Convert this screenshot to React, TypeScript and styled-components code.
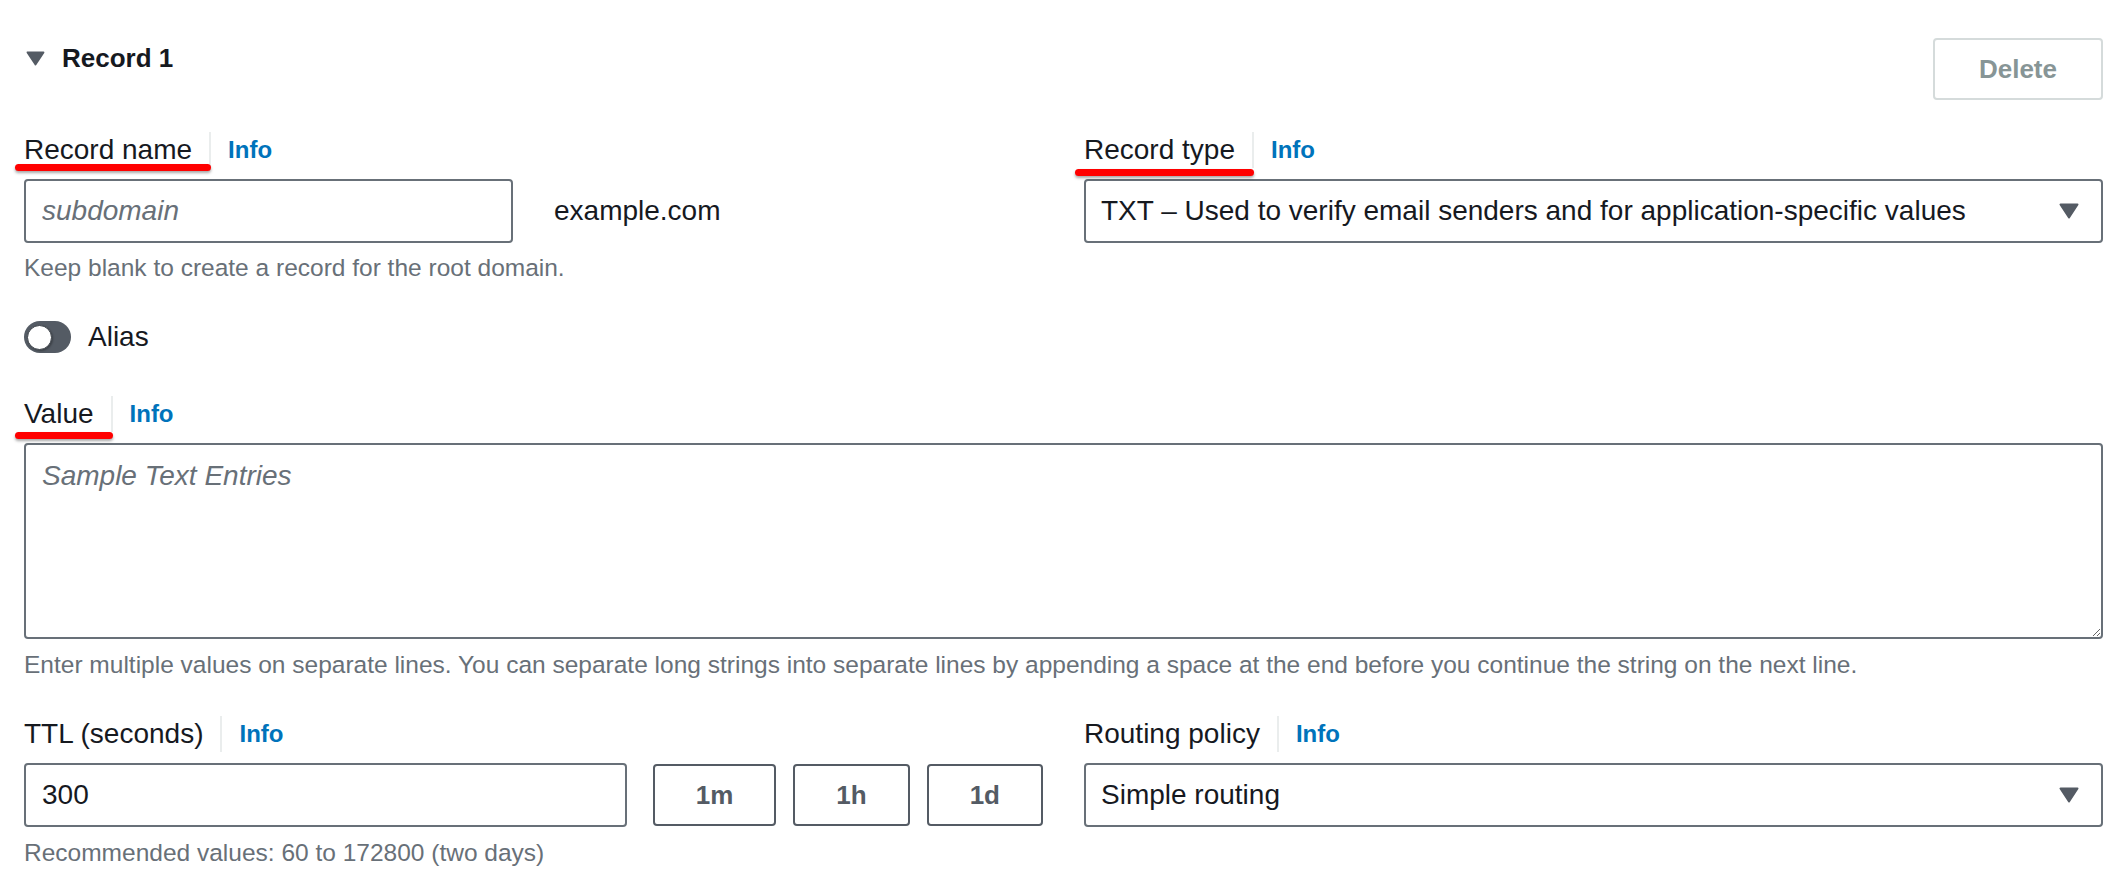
import React from "react";
import styled, { createGlobalStyle } from "styled-components";

const GlobalStyle = createGlobalStyle`
  html, body {
    margin: 0;
    padding: 0;
    background: #ffffff;
  }
  body {
    font-family: "Liberation Sans", Arial, sans-serif;
    color: #16191f;
  }
  * { box-sizing: border-box; }
`;

const Page = styled.div`
  width: 2118px;
  padding: 38px 15px 0 24px;
`;

const Header = styled.div`
  display: flex;
  justify-content: space-between;
  align-items: flex-start;
  margin-bottom: 28px;
`;

const SectionToggle = styled.div`
  display: flex;
  align-items: center;
  gap: 17px;
  height: 40px;
  padding-left: 2px;
  font-size: 26px;
  font-weight: 700;
  line-height: 40px;
  color: #16191f;
`;

const DeleteButton = styled.button`
  height: 62px;
  padding: 0 44px;
  border: 2px solid #d5dbdb;
  border-radius: 4px;
  background: #ffffff;
  color: #879596;
  font-family: inherit;
  font-size: 26px;
  font-weight: 700;
`;

const Grid = styled.div<{ $top?: number }>`
  display: grid;
  grid-template-columns: 1fr 1fr;
  column-gap: 41px;
  margin-top: ${(p) => p.$top ?? 0}px;
`;

const Field = styled.div<{ $top?: number }>`
  display: flex;
  flex-direction: column;
  margin-top: ${(p) => p.$top ?? 0}px;
`;

const LabelRow = styled.div`
  display: flex;
  align-items: center;
  height: 44px;
  margin-bottom: 7px;
`;

const LabelText = styled.span<{ $mark?: number }>`
  position: relative;
  font-size: 28px;
  line-height: 36px;
  padding-right: 17px;
  border-right: 2px solid #eaeded;
  color: #16191f;
  &::after {
    content: "";
    display: ${(p) => (p.$mark !== undefined ? "block" : "none")};
    position: absolute;
    left: -9px;
    right: -2px;
    top: ${(p) => p.$mark ?? 0}px;
    height: 7px;
    border-radius: 4px;
    background: #ff0000;
    box-shadow: 0 2px 3px rgba(0, 0, 0, 0.35);
  }
`;

const InfoLink = styled.a`
  padding-left: 17px;
  font-size: 24px;
  font-weight: 700;
  color: #0073bb;
  text-decoration: none;
`;

const InlineRow = styled.div`
  display: flex;
  align-items: center;
  gap: 41px;
`;

const TextInput = styled.input<{ $width?: number }>`
  height: 64px;
  width: ${(p) => (p.$width ? `${p.$width}px` : "auto")};
  flex: ${(p) => (p.$width ? "none" : "1")};
  min-width: 0;
  padding: 0 16px;
  border: 2px solid #687078;
  border-radius: 4px;
  background: #ffffff;
  font-family: inherit;
  font-size: 28px;
  color: #16191f;
  outline: none;
  &::placeholder {
    color: #687078;
    font-style: italic;
  }
`;

const Suffix = styled.span`
  font-size: 28px;
  color: #16191f;
`;

const Help = styled.div<{ $top?: number }>`
  margin-top: ${(p) => p.$top ?? 9}px;
  font-size: 24.5px;
  line-height: 32px;
  color: #687078;
`;

const Select = styled.div`
  display: flex;
  align-items: center;
  justify-content: space-between;
  height: 64px;
  padding: 0 22px 0 15px;
  border: 2px solid #687078;
  border-radius: 4px;
  background: #ffffff;
  font-size: 28px;
  color: #16191f;
`;

const ToggleRow = styled.div`
  display: flex;
  align-items: center;
  gap: 17px;
  height: 44px;
  margin-top: 31px;
  font-size: 28px;
`;

const Track = styled.span`
  display: flex;
  align-items: center;
  width: 47px;
  height: 32px;
  padding: 0 3px;
  border-radius: 16px;
  background: #545b64;
`;

const Knob = styled.span`
  width: 25px;
  height: 25px;
  border-radius: 50%;
  background: #ffffff;
  border: 1.5px solid #3d434a;
  box-shadow: 1px 1px 2px rgba(0, 0, 0, 0.3);
`;

const TextArea = styled.textarea`
  display: block;
  width: 100%;
  height: 196px;
  padding: 11px 16px;
  border: 2px solid #687078;
  border-radius: 4px;
  background: #ffffff;
  font-family: inherit;
  font-size: 28px;
  line-height: 40px;
  color: #16191f;
  resize: vertical;
  outline: none;
  &::placeholder {
    color: #687078;
    font-style: italic;
  }
`;

const TtlControls = styled.div`
  display: flex;
  align-items: center;
`;

const PresetGroup = styled.div`
  display: flex;
  gap: 17px;
  margin-left: 26px;
`;

const PresetButton = styled.button`
  height: 62px;
  padding: 0 41px;
  border: 2px solid #545b64;
  border-radius: 4px;
  background: #ffffff;
  color: #545b64;
  font-family: inherit;
  font-size: 26px;
  font-weight: 700;
`;

const Caret = ({ w, h }: { w: number; h: number }) => (
  <svg width={w} height={h} viewBox="0 0 20 16" aria-hidden="true">
    <path d="M1.5 1.5 H18.5 L10 14.5 Z" fill="#545b64" stroke="#545b64" strokeWidth="2" strokeLinejoin="round" />
  </svg>
);

const Label = ({ text, mark }: { text: string; mark?: number }) => (
  <LabelRow>
    <LabelText $mark={mark}>{text}</LabelText>
    <InfoLink href="#">Info</InfoLink>
  </LabelRow>
);

export default function App() {
  return (
    <>
      <GlobalStyle />
      <Page>
        <Header>
          <SectionToggle>
            <Caret w={19} h={15} />
            Record 1
          </SectionToggle>
          <DeleteButton disabled>Delete</DeleteButton>
        </Header>

        <Grid>
          <Field>
            <Label text="Record name" mark={32} />
            <InlineRow>
              <TextInput $width={489} placeholder="subdomain" />
              <Suffix>example.com</Suffix>
            </InlineRow>
            <Help>Keep blank to create a record for the root domain.</Help>
          </Field>
          <Field>
            <Label text="Record type" mark={37} />
            <Select>
              <span>TXT – Used to verify email senders and for application-specific values</span>
              <Caret w={20} h={16} />
            </Select>
          </Field>
        </Grid>

        <ToggleRow>
          <Track>
            <Knob />
          </Track>
          Alias
        </ToggleRow>

        <Field $top={33}>
          <Label text="Value" mark={36} />
          <TextArea placeholder="Sample Text Entries" />
          <Help $top={10}>
            Enter multiple values on separate lines. You can separate long strings into separate lines by appending a space at the end before you continue the string on the next line.
          </Help>
        </Field>

        <Grid $top={31}>
          <Field>
            <Label text="TTL (seconds)" />
            <TtlControls>
              <TextInput defaultValue="300" />
              <PresetGroup>
                <PresetButton>1m</PresetButton>
                <PresetButton>1h</PresetButton>
                <PresetButton>1d</PresetButton>
              </PresetGroup>
            </TtlControls>
            <Help $top={10}>Recommended values: 60 to 172800 (two days)</Help>
          </Field>
          <Field>
            <Label text="Routing policy" />
            <Select>
              <span>Simple routing</span>
              <Caret w={20} h={16} />
            </Select>
          </Field>
        </Grid>
      </Page>
    </>
  );
}
